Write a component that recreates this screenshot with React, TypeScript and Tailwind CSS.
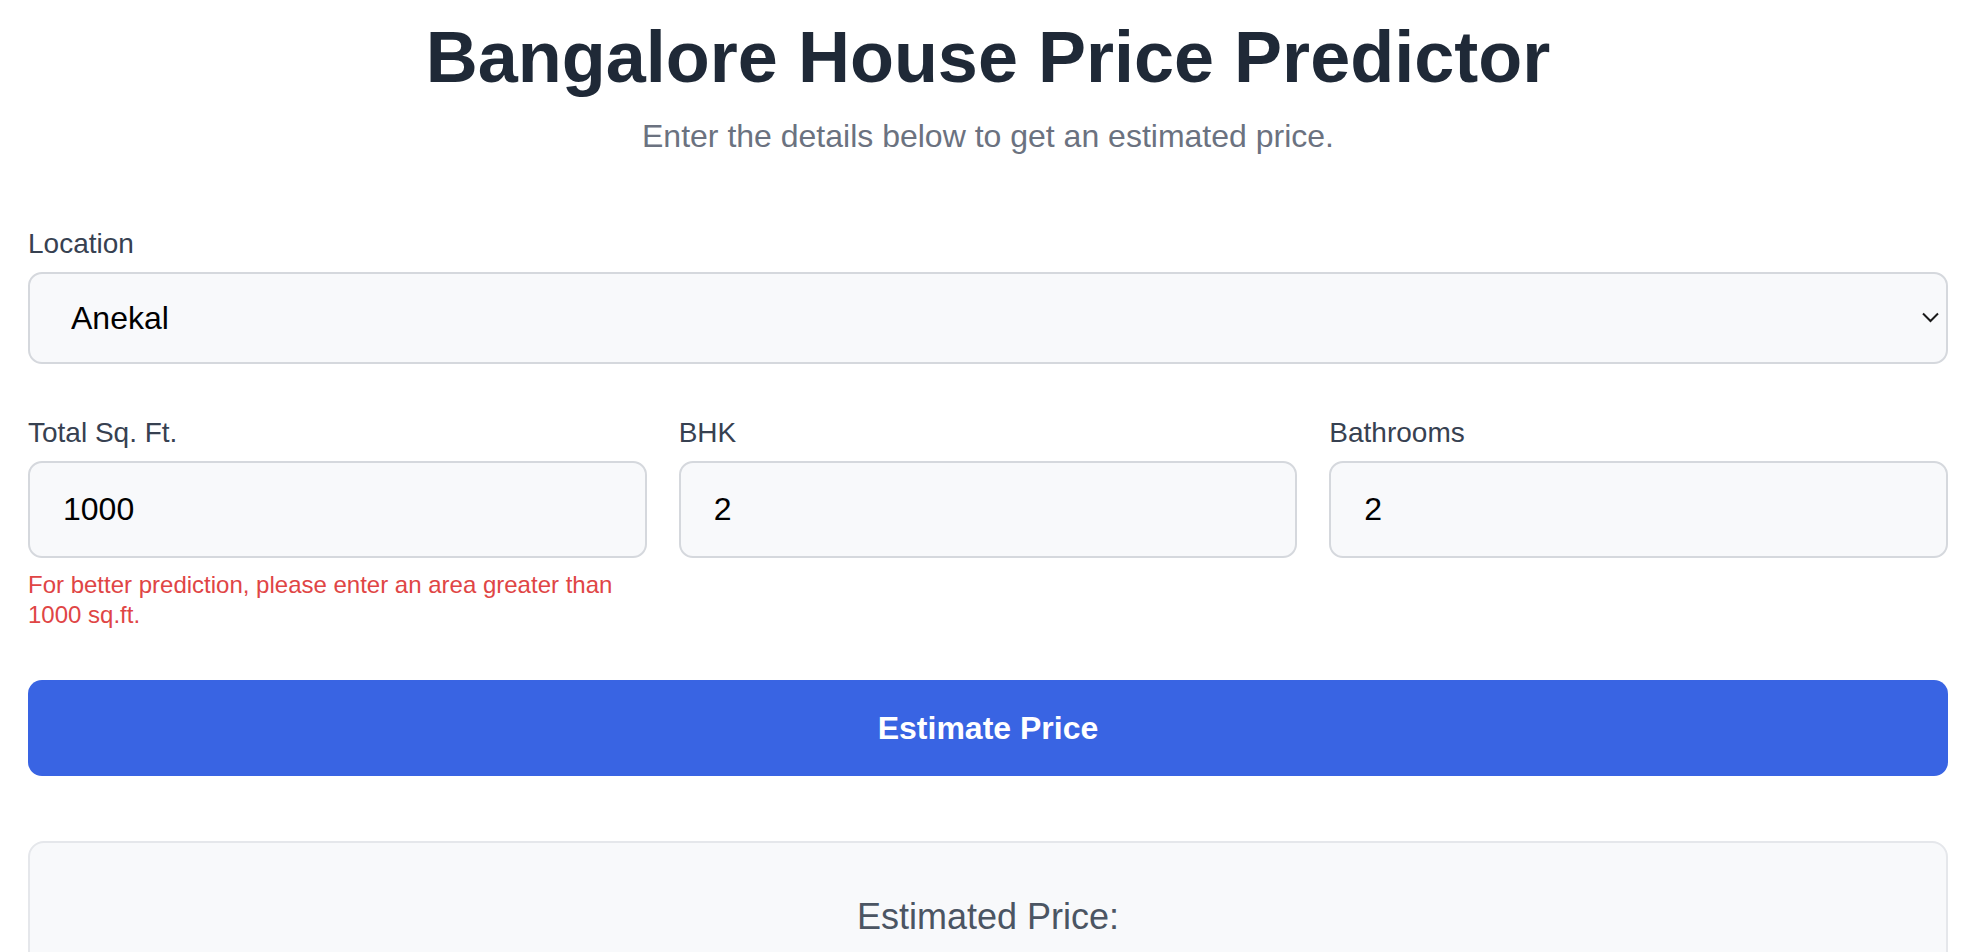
import { useState } from "react";

const locations = ["Anekal", "Electronic City", "Whitefield", "Yelahanka", "Hebbal"];

export default function App() {
  const [location, setLocation] = useState("Anekal");
  const [sqft, setSqft] = useState("1000");
  const [bhk, setBhk] = useState("2");
  const [bath, setBath] = useState("2");

  const inputCls =
    "w-full h-[97px] box-border rounded-[14px] border-2 border-[#d5d8dd] bg-[#f8f9fb] px-[33px] text-[32px] text-black outline-none";
  const labelCls = "block text-[28px] leading-[40px] text-[#374151] mb-[8px]";

  return (
    <div
      className="min-h-screen bg-white pl-[28px] pr-[34px] pt-[21px]"
      style={{ fontFamily: '"Liberation Sans", Arial, Helvetica, sans-serif' }}
    >
      <div className="w-[1920px]">
        <h1 className="text-center text-[72px] leading-[72px] font-bold text-[#1f2937]">
          Bangalore House Price Predictor
        </h1>
        <p className="mt-[23px] text-center text-[32px] leading-[40px] text-[#6b7280]">
          Enter the details below to get an estimated price.
        </p>

        <form className="mt-[68px]" onSubmit={(e) => e.preventDefault()}>
          <label className={labelCls}>Location</label>
          <div className="relative">
            <select
              value={location}
              onChange={(e) => setLocation(e.target.value)}
              className="w-full h-[92px] box-border appearance-none rounded-[14px] border-2 border-[#d5d8dd] bg-[#f8f9fb] pl-[41px] text-[32px] text-black outline-none"
            >
              {locations.map((l) => (
                <option key={l}>{l}</option>
              ))}
            </select>
            <svg
              className="pointer-events-none absolute right-[9px] top-[40px]"
              width="17"
              height="11"
              viewBox="0 0 17 11"
              fill="none"
            >
              <polyline points="1,1.5 8.5,9 16,1.5" stroke="#1a1a1a" strokeWidth="2" />
            </svg>
          </div>

          <div className="mt-[49px] grid grid-cols-3 gap-x-[32px]">
            <div>
              <label className={labelCls}>Total Sq. Ft.</label>
              <input className={inputCls} value={sqft} onChange={(e) => setSqft(e.target.value)} />
              <p className="mt-[12px] text-[24px] leading-[30px] text-[#e04545]">
                For better prediction, please enter an area greater than 1000 sq.ft.
              </p>
            </div>
            <div>
              <label className={labelCls}>BHK</label>
              <input className={inputCls} value={bhk} onChange={(e) => setBhk(e.target.value)} />
            </div>
            <div>
              <label className={labelCls}>Bathrooms</label>
              <input className={inputCls} value={bath} onChange={(e) => setBath(e.target.value)} />
            </div>
          </div>

          <button className="mt-[50px] w-full h-[96px] rounded-[14px] bg-[#3964e3] text-[32px] font-bold text-white cursor-pointer">
            Estimate Price
          </button>
        </form>

        <div className="mt-[65px] rounded-[16px] border-2 border-[#e5e7eb] bg-[#f8f9fb] pt-[52px] pb-[60px] text-center">
          <h2 className="text-[36px] leading-[44px] text-[#4b5563]">Estimated Price:</h2>
        </div>
      </div>
    </div>
  );
}
